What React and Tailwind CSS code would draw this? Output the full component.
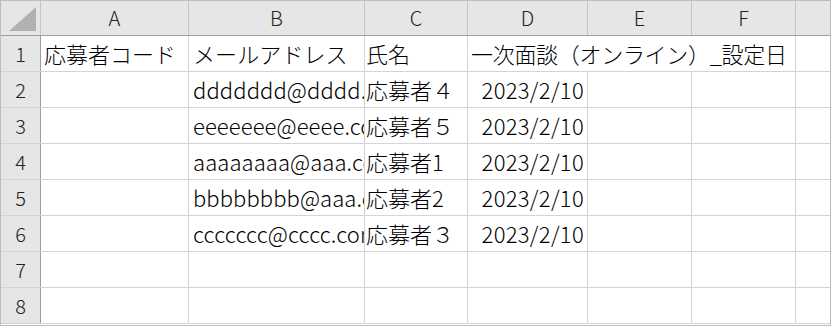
import React from 'react';

const cols = [
  { key: 'A', w: 'w-[148px]' },
  { key: 'B', w: 'w-[176px]' },
  { key: 'C', w: 'w-[103px]' },
  { key: 'D', w: 'w-[120px]' },
  { key: 'E', w: 'w-[104px]' },
  { key: 'F', w: 'w-[104px]' },
];

const rows = [
  { n: 1, a: '応募者コード', b: 'メールアドレス', c: '氏名', d: '一次面談（オンライン）_設定日', header: true },
  { n: 2, b: 'ddddddd@dddd.com', c: '応募者４', d: '2023/2/10' },
  { n: 3, b: 'eeeeeee@eeee.com', c: '応募者５', d: '2023/2/10' },
  { n: 4, b: 'aaaaaaaa@aaa.com', c: '応募者1', d: '2023/2/10' },
  { n: 5, b: 'bbbbbbbb@aaa.com', c: '応募者2', d: '2023/2/10' },
  { n: 6, b: 'ccccccc@cccc.com', c: '応募者３', d: '2023/2/10' },
  { n: 7 },
  { n: 8 },
];

const cell = 'h-full shrink-0 border-r border-[#d4d4d4] overflow-hidden whitespace-nowrap flex items-center';

function Row({ r }) {
  return (
    <div className="flex h-[36px] border-b border-[#d4d4d4]">
      <div className="w-[40px] shrink-0 h-full bg-[#e6e6e6] border-r border-[#9e9e9e] flex items-center justify-center text-[20px] text-[#222]">
        {r.n}
      </div>
      <div className={`${cell} w-[148px] px-[3px]`}>{r.a}</div>
      <div className={`${cell} w-[176px] px-[4px] tracking-[0.1px]`}>{r.b}</div>
      <div className={`${cell} w-[103px] px-[1px]`}>{r.c}</div>
      {r.header ? (
        <div className={`${cell} w-[328px] px-[3px] tracking-[-0.3px]`}>{r.d}</div>
      ) : (
        <>
          <div className={`${cell} w-[120px] pr-[3px] justify-end tracking-[0.3px]`}>{r.d}</div>
          <div className={`${cell} w-[104px]`} />
          <div className={`${cell} w-[104px]`} />
        </>
      )}
      <div className="flex-1 h-full" />
    </div>
  );
}

export default function App() {
  return (
    <div
      className="w-[831px] h-[326px] bg-white border border-[#bdbdbd] overflow-hidden text-black text-[22px] font-light"
      style={{ fontFamily: '"Noto Sans CJK JP", "Noto Sans", sans-serif' }}
    >
      {/* column headers */}
      <div className="flex h-[35px] bg-[#e6e6e6] border-b border-[#9e9e9e]">
        <div className="w-[40px] shrink-0 h-full border-r border-[#c6c6c6] relative">
          <svg width="28" height="25" viewBox="0 0 28 25" className="absolute left-[8px] top-[6px]">
            <polygon points="27,0 27,24 0,24" fill="#b1b1b1" />
          </svg>
        </div>
        {cols.map((c) => (
          <div
            key={c.key}
            className={`${c.w} shrink-0 h-full border-r border-[#c6c6c6] flex items-center justify-center text-[20px] text-[#222]`}
          >
            {c.key}
          </div>
        ))}
        <div className="flex-1 h-full" />
      </div>
      {rows.map((r) => (
        <Row key={r.n} r={r} />
      ))}
    </div>
  );
}
